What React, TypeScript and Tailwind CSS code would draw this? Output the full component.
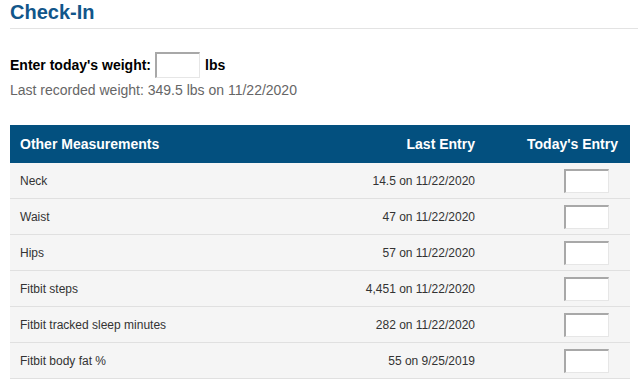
const rows = [
	{ name: "Neck", last: "14.5 on 11/22/2020" },
	{ name: "Waist", last: "47 on 11/22/2020" },
	{ name: "Hips", last: "57 on 11/22/2020" },
	{ name: "Fitbit steps", last: "4,451 on 11/22/2020" },
	{ name: "Fitbit tracked sleep minutes", last: "282 on 11/22/2020" },
	{ name: "Fitbit body fat %", last: "55 on 9/25/2019" },
];

function EntryInput({ className }: { className: string }) {
	return (
		<input
			type="text"
			className={`bg-white border-t-2 border-l-2 border-b border-r border-t-[#a8a8a8] border-l-[#a8a8a8] border-b-[#e6e6e6] border-r-[#e6e6e6] outline-none ${className}`}
		/>
	);
}

function App() {
	return (
		<div className="w-[638px] h-[391px] bg-white pl-[10px] font-['Liberation_Sans',Arial,sans-serif] text-[#333]">
			<h1 className="text-[20px] leading-[22px] font-bold text-[#11568a] pt-px">
				Check-In
			</h1>
			<div className="mt-[5px] border-t border-[#e3e3e3]" />

			<div className="mt-[23px] flex items-center text-[14px] font-bold text-black h-[26px]">
				<span>Enter today's weight:</span>
				<EntryInput className="ml-[4px] w-[45px] h-[26px]" />
				<span className="ml-[5px]">lbs</span>
			</div>
			<p className="mt-[4px] text-[14px] leading-[16px] text-[#666]">
				Last recorded weight: 349.5 lbs on 11/22/2020
			</p>

			<div className="mt-[27px] w-[620px] text-[12px]">
				<div className="flex items-center h-[38px] bg-[#03507f] text-white text-[14px] font-bold">
					<div className="flex-1 pl-[10px]">Other Measurements</div>
					<div className="w-[200px] text-right">Last Entry</div>
					<div className="w-[155px] text-right pr-[12px]">Today's Entry</div>
				</div>
				{rows.map((r) => (
					<div
						key={r.name}
						className="flex items-center h-[36px] bg-[#f5f5f5] border-b border-[#e0e0e0]"
					>
						<div className="flex-1 pl-[10px]">{r.name}</div>
						<div className="w-[200px] text-right">{r.last}</div>
						<div className="w-[155px] flex justify-end pr-[21px]">
							<EntryInput className="w-[45px] h-[24px]" />
						</div>
					</div>
				))}
			</div>
		</div>
	);
}

export default App;
